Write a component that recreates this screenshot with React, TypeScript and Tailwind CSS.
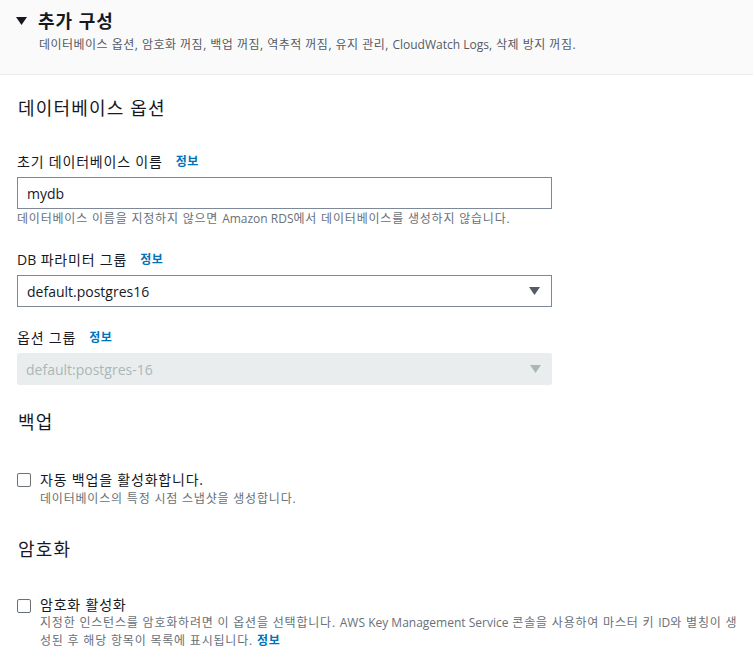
import React from "react";

const font = { fontFamily: '"Open Sans", "Noto Sans CJK KR", sans-serif' };

function Info() {
  return <span className="ml-[13px] text-[12px] font-bold leading-[16px] tracking-[0.05em] text-[#0073bb]">정보</span>;
}

function L({ children }: { children: React.ReactNode }) {
  return <span className="tracking-normal">{children}</span>;
}

function Triangle({ color }: { color: string }) {
  return (
    <svg width="11" height="8" viewBox="0 0 11 8">
      <path d="M0 0 L11 0 L5.5 8 Z" fill={color} />
    </svg>
  );
}

function Checkbox() {
  return <span className="mt-[3px] h-[14px] w-[14px] shrink-0 rounded-[2px] border-[1.5px] border-[#687078] bg-white" />;
}

export default function App() {
  return (
    <div className="min-h-[671px] w-[753px] bg-white tracking-[0.05em] text-[#16191f]" style={font}>
      <div className="h-[75px] border-b border-[#eaeded] bg-[#fafafa] pl-[16px]">
        <div className="flex items-center pt-[10px] leading-[22px]">
          <Triangle color="#16191f" />
          <span className="ml-[11px] text-[18px] font-bold tracking-[0.055em]">추가 구성</span>
        </div>
        <div className="mt-[5px] pl-[23px] text-[12px] leading-[16px] tracking-[0.04em] text-[#545b64]">
          데이터베이스 옵션, 암호화 꺼짐, 백업 꺼짐, 역추적 꺼짐, 유지 관리, <L>CloudWatch Logs</L>, 삭제 방지 꺼짐.
        </div>
      </div>

      <div className="flex flex-col pl-[17px] pr-[10px]">
        <div className="mt-[21px] pl-[1px] text-[18px] leading-[24px] tracking-[0.065em]">데이터베이스 옵션</div>

        <div className="mt-[32px] flex h-[20px] items-center text-[14px] leading-[20px]">
          초기 데이터베이스 이름<Info />
        </div>
        <div className="mt-[5px] flex h-[32px] w-[535px] items-center border border-[#7d8998] bg-white px-[9px] text-[14px] tracking-normal">
          mydb
        </div>
        <div className="mt-[2px] text-[12px] leading-[16px] text-[#687078]">
          데이터베이스 이름을 지정하지 않으면 <L>Amazon RDS</L>에서 데이터베이스를 생성하지 않습니다.
        </div>

        <div className="mt-[23px] flex h-[20px] items-center text-[14px] leading-[20px]">
          <L>DB</L>&nbsp;파라미터 그룹<Info />
        </div>
        <div className="mt-[5px] flex h-[32px] w-[535px] items-center justify-between border border-[#7d8998] bg-white pl-[9px] pr-[11px] text-[14px] tracking-normal">
          <span>default.postgres16</span>
          <Triangle color="#545b64" />
        </div>

        <div className="mt-[21px] flex h-[20px] items-center text-[14px] leading-[20px]">
          옵션 그룹<Info />
        </div>
        <div className="mt-[5px] flex h-[32px] w-[535px] items-center justify-between rounded-[2px] bg-[#eaeded] pl-[9px] pr-[11px] text-[14px] tracking-normal text-[#aab7b8]">
          <span>default:postgres-16</span>
          <Triangle color="#aab7b8" />
        </div>

        <div className="mt-[25px] pl-[1px] text-[18px] leading-[24px] tracking-[0.065em]">백업</div>

        <div className="mt-[36px] flex gap-[9px]">
          <Checkbox />
          <div className="flex flex-col">
            <div className="text-[14px] leading-[20px]">자동 백업을 활성화합니다.</div>
            <div className="mt-[1px] text-[12px] leading-[16px] text-[#687078]">데이터베이스의 특정 시점 스냅샷을 생성합니다.</div>
          </div>
        </div>

        <div className="mt-[30px] pl-[1px] text-[18px] leading-[24px] tracking-[0.065em]">암호화</div>

        <div className="mt-[35px] flex gap-[9px]">
          <Checkbox />
          <div className="flex flex-col">
            <div className="text-[14px] leading-[18px]">암호화 활성화</div>
            <div className="text-[12px] leading-[18px] text-[#687078]">
              지정한 인스턴스를 암호화하려면 이 옵션을 선택합니다. <L>AWS Key Management Service</L> 콘솔을 사용하여 마스터 키 <L>ID</L>와 별칭이 생성된 후 해당 항목이 목록에 표시됩니다.{" "}
              <span className="font-bold text-[#0073bb]">정보</span>
            </div>
          </div>
        </div>
      </div>
    </div>
  );
}
